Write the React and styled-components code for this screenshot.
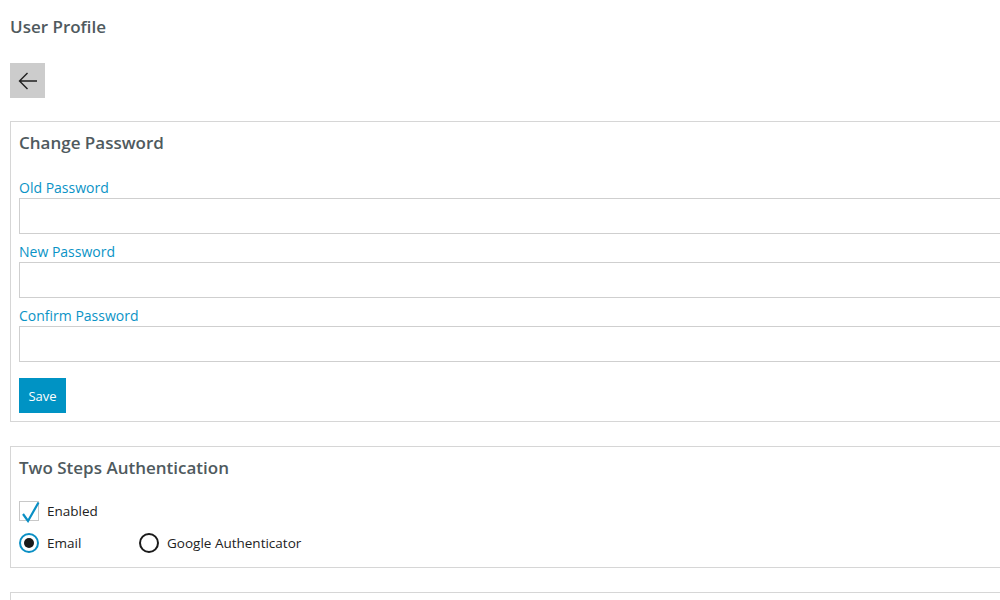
import React, { useState } from "react";
import styled, { createGlobalStyle } from "styled-components";

const GlobalStyle = createGlobalStyle`
  html, body {
    margin: 0;
    padding: 0;
    background: #fff;
    overflow: hidden;
  }
  body {
    font-family: "Open Sans", "Noto Sans", sans-serif;
  }
`;

const Page = styled.div`
  width: 1040px;
  padding: 10px;
  box-sizing: border-box;
`;

const Title = styled.h1`
  margin: 0 0 19px;
  height: 34px;
  line-height: 34px;
  font-size: 17px;
  font-weight: 600;
  color: #4f5a5e;
`;

const BackButton = styled.button`
  display: flex;
  align-items: center;
  justify-content: center;
  width: 35px;
  height: 35px;
  padding: 0;
  margin: 0 0 23px;
  border: none;
  background: #cccccc;
  cursor: pointer;
`;

const Panel = styled.section`
  border: 1px solid #d6d6d6;
  padding: 8px;
  margin-bottom: 24px;
  min-height: ${(p) => p.minHeight || 0}px;
`;

const PanelTitle = styled.h2`
  margin: 0 0 ${(p) => p.gap || 22}px;
  height: 26px;
  line-height: 26px;
  font-size: 17px;
  font-weight: 600;
  color: #4f5a5e;
`;

const Label = styled.label`
  display: block;
  height: 20px;
  line-height: 20px;
  font-size: 14px;
  color: #0a93c6;
`;

const Input = styled.input`
  display: block;
  width: 100%;
  height: 36px;
  box-sizing: border-box;
  border: 1px solid #cfcfcf;
  margin: 0 0 8px;
  padding: 0 8px;
  font: inherit;
  outline: none;
`;

const SaveButton = styled.button`
  margin-top: 8px;
  height: 35px;
  width: 47px;
  border: none;
  background: #0093c4;
  color: #fff;
  font-family: inherit;
  font-size: 13px;
  cursor: pointer;
  padding: 0;
`;

const CheckRow = styled.label`
  display: flex;
  align-items: center;
  gap: 8px;
  height: 20px;
  font-size: 13.5px;
  color: #222;
  cursor: pointer;
`;

const Box = styled.span`
  position: relative;
  flex: 0 0 auto;
  width: 20px;
  height: 20px;
  box-sizing: border-box;
  border: 1px solid #c8c8c8;
  svg {
    position: absolute;
    left: 1px;
    top: -1px;
  }
`;

const RadioRow = styled.div`
  display: flex;
  margin-top: 11px;
  margin-bottom: 5px;
  height: 22px;
`;

const RadioOption = styled.label`
  display: flex;
  align-items: center;
  gap: 8px;
  width: 120px;
  flex: 0 0 auto;
  white-space: nowrap;
  font-size: 13.5px;
  color: #222;
  cursor: pointer;
`;

const Circle = styled.span`
  display: flex;
  flex: 0 0 auto;
  align-items: center;
  justify-content: center;
  width: 20px;
  height: 20px;
  box-sizing: border-box;
  border-radius: 50%;
  border: 2px solid ${(p) => (p.checked ? "#0a8fc4" : "#1a1a1a")};
  &::after {
    content: "";
    display: ${(p) => (p.checked ? "block" : "none")};
    width: 10px;
    height: 10px;
    border-radius: 50%;
    background: #1a1a1a;
  }
`;

const fields = ["Old Password", "New Password", "Confirm Password"];

const App = () => {
  const [enabled, setEnabled] = useState(true);
  const [method, setMethod] = useState("email");

  return (
    <Page>
      <GlobalStyle />
      <Title>User Profile</Title>
      <BackButton aria-label="Back">
        <svg width="20" height="20" viewBox="0 0 20 20" fill="none">
          <path
            d="M19 10H2M9.5 2L1.5 10L9.5 18"
            stroke="#1f1f1f"
            strokeWidth="1.4"
          />
        </svg>
      </BackButton>

      <Panel>
        <PanelTitle>Change Password</PanelTitle>
        {fields.map((f) => (
          <div key={f}>
            <Label>{f}</Label>
            <Input type="password" />
          </div>
        ))}
        <SaveButton>Save</SaveButton>
      </Panel>

      <Panel>
        <PanelTitle gap={20}>Two Steps Authentication</PanelTitle>
        <CheckRow onClick={() => setEnabled(!enabled)}>
          <Box>
            {enabled && (
              <svg width="20" height="22" viewBox="0 0 20 22" fill="none">
                <path
                  d="M2 13L7 20L17.5 1.5"
                  stroke="#0a8fc4"
                  strokeWidth="2.2"
                />
              </svg>
            )}
          </Box>
          Enabled
        </CheckRow>
        <RadioRow>
          <RadioOption onClick={() => setMethod("email")}>
            <Circle checked={method === "email"} />
            Email
          </RadioOption>
          <RadioOption onClick={() => setMethod("google")}>
            <Circle checked={method === "google"} />
            Google Authenticator
          </RadioOption>
        </RadioRow>
      </Panel>

      <Panel minHeight={60} />
    </Page>
  );
};

export default App;
